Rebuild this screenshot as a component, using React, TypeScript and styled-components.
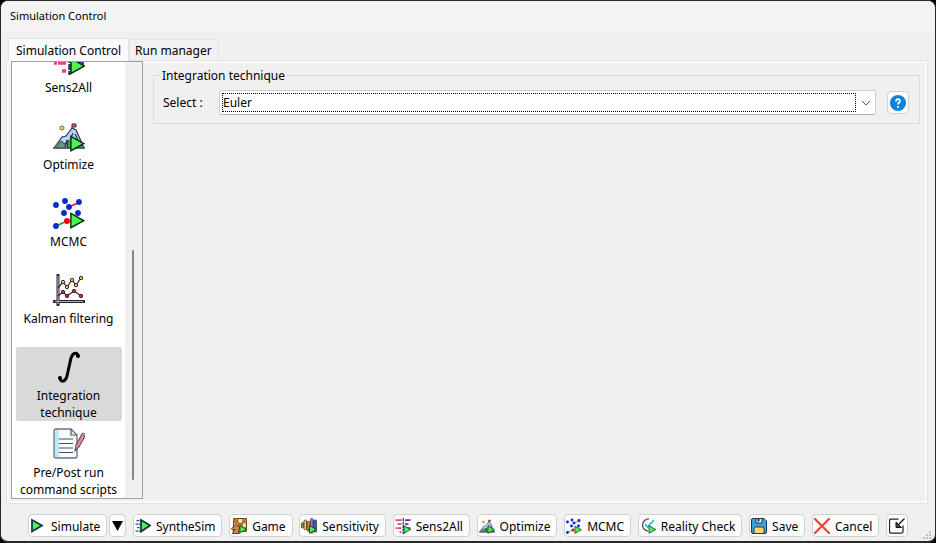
import React from 'react';
import styled, { createGlobalStyle } from 'styled-components';

const GlobalStyle = createGlobalStyle`
  * { box-sizing: border-box; }
  body { margin: 0; background: #000; }
  button, select { font: inherit; color: inherit; }
`;

const Window = styled.main`
  display: flex;
  flex-direction: column;
  height: 100vh;
  border: 1px solid #2b282c;
  border-bottom-width: 2px;
  border-radius: 8px;
  overflow: hidden;
  background: #f0f0f0;
  color: #000;
  font: 12px/17px 'Noto Sans', 'Open Sans', sans-serif;
`;

const TitleBar = styled.header`
  flex: none;
  height: 30px;
  padding: 0 9px;
  background: #f3f3f3;
  font: 11px/30px 'Noto Sans', 'Open Sans', sans-serif;
`;

const TabList = styled.div`
  display: flex;
  align-items: flex-end;
  flex: none;
  height: 29px;
  padding-left: 7px;
`;

const Tab = styled.button<{ $active?: boolean }>`
  height: ${p => (p.$active ? 23 : 21)}px;
  padding: 0 ${p => (p.$active ? 7 : 5)}px;
  margin-bottom: ${p => (p.$active ? -1 : 0)}px;
  position: relative;
  border: 1px solid #e3e3e3;
  border-bottom: 0;
  background: ${p => (p.$active ? '#fafafa' : '#f1f1f1')};
  white-space: nowrap;
`;

const Panel = styled.section`
  display: flex;
  flex: 1;
  min-height: 0;
  gap: 10px;
  margin: 0 7px 0 5px;
  padding: 0 7px 4px 4px;
  border: 1px solid #e3e3e3;
  box-shadow: inset 0 0 0 2px #f9f9f9;
`;

const ListBox = styled.nav`
  display: flex;
  flex: none;
  width: 132px;
  border: 1px solid #a0a0a5;
  background: #fff;
`;

const Items = styled.div`
  display: flex;
  flex: 1;
  flex-direction: column;
  justify-content: flex-end;
  align-items: center;
  gap: 3px;
  overflow: hidden;
`;

const Item = styled.button<{ $selected?: boolean }>`
  display: flex;
  flex: none;
  flex-direction: column;
  align-items: center;
  gap: 4px;
  width: 106px;
  height: 74px;
  padding: 4px 0 0;
  border: 0;
  border-radius: 2px;
  background: ${p => (p.$selected ? '#d9d9d9' : 'transparent')};
  white-space: pre-line;
`;

const ScrollTrack = styled.div`
  display: flex;
  flex-direction: column;
  justify-content: flex-end;
  align-items: center;
  width: 17px;
  padding: 0 2px 18px 0;
  background: #f0f0f0;
`;

const ScrollThumb = styled.div`
  width: 2px;
  height: 55%;
  border-radius: 1px;
  background: #868686;
`;

const Settings = styled.div`
  flex: 1;
  padding-top: 6px;
`;

const Group = styled.fieldset`
  min-width: 0;
  margin: 0;
  padding: 6px 10px 8px 9px;
  border: 1px solid #dcdcdc;
`;

const Legend = styled.legend`
  margin-left: -3px;
  padding: 0 2px;
`;

const Field = styled.div`
  display: flex;
  align-items: center;
`;

const FieldLabel = styled.label`
  flex: none;
  width: 56px;
`;

const Combo = styled.div`
  display: grid;
  flex: 1;
  align-items: center;
  height: 25px;
  padding: 2px;
  margin-right: 11px;
  border: 1px solid #d0d0d0;
  border-bottom-color: #b5b5b5;
  border-radius: 2px;
  background: #fff;
  > * { grid-area: 1 / 1; }
  > svg { justify-self: end; pointer-events: none; }
`;

const Select = styled.select`
  appearance: none;
  width: calc(100% - 17px);
  height: 19px;
  padding: 0;
  border: 1px dotted #000;
  border-radius: 0;
  outline: 0;
  background: #fff;
`;

const ToolButton = styled.button<{ $iconOnly?: boolean }>`
  display: flex;
  flex: none;
  align-items: center;
  justify-content: center;
  gap: 5px;
  height: 23px;
  padding: ${p => (p.$iconOnly ? '0 2px' : '0 6px 0 1px')};
  border: 1px solid #d0d0d0;
  border-radius: 4px;
  background: #fdfdfd;
  white-space: nowrap;
  svg { flex: none; }
`;

const SplitButton = styled.div`
  display: flex;
  gap: 2px;
`;

const ArrowButton = styled(ToolButton)`
  width: 17px;
  padding: 0;
`;

const Caption = styled.span`
  padding-top: 2px;
`;

const Footer = styled.footer`
  display: flex;
  flex: none;
  justify-content: space-between;
  padding: 10px 27px 4px;
`;

const Grip = styled.svg`
  position: absolute;
  right: 4px;
  bottom: 3px;
`;

const Play = ({ x = 15, y = 14, s = 1 }: { x?: number; y?: number; s?: number }) => (
  <path transform={`translate(${x} ${y}) scale(${s})`} d="M2 1.5 15.5 9 2 16.5Z" fill="#4df552" stroke="#082b22" strokeWidth="1.5" />
);

type IconProps = { size?: number };
const Svg = ({ size = 16, children }: IconProps & { children: React.ReactNode }) => (
  <svg width={size} height={size} viewBox="0 0 32 32" fill="none" aria-hidden="true">{children}</svg>
);

const SimulateIcon = () => (
  <Svg><path d="M4 4 24 15 4 27Z" fill="#4df552" stroke="#123348" strokeWidth="3.5" /></Svg>
);
const SyntheSimIcon = () => (
  <Svg>
    <path d="M3 5h7M1 12h9M4 19h6M1 26h9" stroke="#31536a" strokeWidth="2.5" strokeDasharray="5 1" />
    <path d="M12 4 30 15 12 27Z" fill="#4df552" stroke="#123348" strokeWidth="3.5" />
  </Svg>
);
const GameIcon = () => (
  <Svg>
    <path d="M5 1h26v26H5z" fill="#f4dfb5" stroke="#5b3f22" strokeWidth="2" />
    <path d="M5 1h9v9H5zM23 1h8v9h-8zM14 10h9v9h-9zM23 19h8v8h-8z" fill="#b97924" />
    <path d="M14 1v26M23 1v26M5 10h26M5 19h26" stroke="#77511f" />
    <path d="M3 31h14l-2-5c4-6 1-12-6-14l-1 3-7 6 2 3 5-1-4 5Z" fill="#c08a48" stroke="#60401e" strokeWidth="2" />
    <Play x={16} y={14} s={0.95} />
  </Svg>
);
const SensitivityIcon = () => (
  <Svg>
    <g stroke="#26372c" strokeWidth="1.5">
      <rect x="1" y="9" width="4" height="11" rx="2" fill="#74ba4c" />
      <rect x="6" y="4" width="5" height="19" rx="2" fill="#ffd13e" />
      <rect x="12" y="7" width="6" height="19" rx="2" fill="#f27a34" />
      <rect x="19" y="1" width="5" height="25" rx="2" fill="#ad73d3" />
      <rect x="25" y="4" width="6" height="24" rx="2" fill="#4058b5" />
      <path d="m14 22 5 8h6" fill="#e84f42" />
    </g>
    <Play x={15} y={14} />
  </Svg>
);
const Sens2AllIcon = ({ size }: IconProps) => (
  <Svg size={size}>
    <path d="M1 4h12M5 12h8M1 20h3M5 20h8M9 28h4" stroke="#ed3c91" strokeWidth="3.5" />
    <path d="M20 4h11M20 12h7M20 20h11" stroke="#7027b5" strokeWidth="3.5" />
    <path d="M16.5 0v32" stroke="#243747" strokeWidth="2.5" strokeDasharray="6 1" />
    <Play x={16} y={14} />
  </Svg>
);
const OptimizeIcon = ({ size }: IconProps) => (
  <Svg size={size}>
    <g transform="translate(0 3)">
      <path d="M1 25 9 14l4-1 6-8 4 2 8 18Z" fill="#b7d3fb" stroke="#29384a" strokeWidth="1.2" />
      <path d="m3 25 5-7 4 3 3-4 4 4 5-3 6 7Z" fill="#659a72" stroke="#294c36" strokeWidth="1" />
      <path d="m12 24 2-7 1 7M20 10l-3 7m5-6 3 6" stroke="#1e3e31" strokeWidth="1.2" />
      <circle cx="9" cy="5" r="2" fill="#ffdc64" stroke="#715726" />
      <path d="M19 6V1M19 1h4v3h-4" fill="#ef5964" stroke="#352d3a" />
      <path d="M0 25h32" stroke="#53635a" strokeWidth="1.5" />
    </g>
    <Play x={16} y={15} s={0.95} />
  </Svg>
);
const McmcIcon = ({ size }: IconProps) => (
  <Svg size={size}>
    <path d="m16 10 11-5" stroke="#f21622" strokeWidth="1.5" />
    <path d="m3 29 11-5" stroke="#00b21c" strokeWidth="1.5" />
    {[[3, 8], [12, 4], [26, 5], [16, 10], [11, 16], [25, 16], [3, 29]].map(([x, y]) => (
      <circle key={`${x}-${y}`} cx={x} cy={y} r="2.9" fill="#052bd3" />
    ))}
    <circle cx="14" cy="24" r="3" fill="#f00" />
    <Play x={16} y={15} s={0.95} />
  </Svg>
);
const KalmanIcon = () => (
  <Svg size={32}>
    <path d="M5 1v30M1 27.5h30" stroke="#272330" strokeWidth="3" strokeLinecap="round" />
    <path d="M5 2v28M2 27.5h28" stroke="#b5a9b8" strokeWidth="1.2" />
    <path d="m5 14 5-6 4 5 5-7 4 5 5-7M5 22l5-4 4 4 7-5 7 5" stroke="#292530" strokeWidth="1.2" />
    {[[10, 8], [14, 13], [19, 6], [23, 11], [28, 4]].map(([x, y]) => <circle key={x} cx={x} cy={y} r="1.7" fill="#e9c645" stroke="#2c2623" />)}
    {[[10, 18], [14, 22], [21, 17], [28, 22]].map(([x, y]) => <circle key={x} cx={x} cy={y} r="1.7" fill="#e42634" stroke="#421c26" />)}
  </Svg>
);
const IntegralIcon = () => (
  <Svg size={32}>
    <path d="M7 27c0 4 5 5 7-2l4-18c2-6 7-6 7-2" stroke="#000" strokeWidth="3" strokeLinecap="round" />
    <circle cx="7" cy="27" r="2" fill="#000" /><circle cx="25" cy="5" r="2" fill="#000" />
  </Svg>
);
const ScriptIcon = () => (
  <Svg size={32}>
    <path d="M3 1h15l6 6v21q0 2-2 2H3q-2 0-2-2V3q0-2 2-2Z" fill="#f5fafc" />
    <path d="M2 2h4v27H2Z" fill="#bee6f6" />
    <path d="M3 1h15l6 6v21q0 2-2 2H3q-2 0-2-2V3q0-2 2-2Z" stroke="#68747b" strokeWidth="1.3" />
    <path d="M18 1v6h6M6 11h14M6 15.500h14M6 20h14M6 24.500h14" stroke="#47535a" strokeWidth="1.2" />
    <path d="m22 23 1-6 6-11 3 2-6 11-4 4Z" fill="#e48d8c" stroke="#634b52" strokeWidth="1.1" />
    <path d="m29 6 1-1 2 1v2" fill="#eee" stroke="#47535a" />
  </Svg>
);
const RealityIcon = () => (
  <Svg>
    <path d="M18 2a12 12 0 1 0-2 24" stroke="#4a4057" strokeWidth="2.5" />
    <path d="m10 12 5 6L28 4" stroke="#16bdd0" strokeWidth="3" />
    <Play x={16} y={14} />
  </Svg>
);
const SaveIcon = () => (
  <Svg>
    <path d="M3 1h23l5 5v22q0 3-3 3H4q-3 0-3-3V4q0-3 2-3Z" fill="#3ca0df" stroke="#203747" strokeWidth="2" />
    <path d="M10 1h12v9H10z" fill="#eef3f5" stroke="#203747" strokeWidth="2" />
    <path d="M13 2h4v5h-4z" fill="#203747" />
    <path d="M6 31V21q0-3 3-3h14q3 0 3 3v10z" fill="#ffd66e" stroke="#203747" strokeWidth="2" />
  </Svg>
);
const CancelIcon = () => (
  <Svg><path d="m2 2 28 28M30 2 2 30" stroke="#f44336" strokeWidth="4.5" strokeLinecap="round" /></Svg>
);
const DockIcon = () => (
  <Svg>
    <path d="M19 2H4Q1 2 1 5v22q0 3 3 3h21q3 0 3-3V15" stroke="#222" strokeWidth="2.5" />
    <path d="M31 1 17 15" stroke="#111" strokeWidth="2.5" />
    <path d="M14 8v11h11Z" fill="#285b32" stroke="#111" strokeWidth="2" />
  </Svg>
);
const HelpIcon = () => (
  <Svg>
    <circle cx="16" cy="16" r="16" fill="#0c83da" />
    <path d="M12 13c0-6 8-6 8-1 0 3-4 3-4 7" stroke="#fff" strokeWidth="3.5" />
    <circle cx="16" cy="24" r="2.2" fill="#fff" />
  </Svg>
);

const items = [
  { label: 'Sens2All', icon: <Sens2AllIcon size={32} /> },
  { label: 'Optimize', icon: <OptimizeIcon size={32} /> },
  { label: 'MCMC', icon: <McmcIcon size={32} /> },
  { label: 'Kalman filtering', icon: <KalmanIcon /> },
  { label: 'Integration\ntechnique', icon: <IntegralIcon />, selected: true },
  { label: 'Pre/Post run\ncommand scripts', icon: <ScriptIcon /> },
];

const actions = [
  { label: 'SyntheSim', icon: <SyntheSimIcon /> },
  { label: 'Game', icon: <GameIcon /> },
  { label: 'Sensitivity', icon: <SensitivityIcon /> },
  { label: 'Sens2All', icon: <Sens2AllIcon /> },
  { label: 'Optimize', icon: <OptimizeIcon /> },
  { label: 'MCMC', icon: <McmcIcon /> },
  { label: 'Reality Check', icon: <RealityIcon /> },
  { label: 'Save', icon: <SaveIcon /> },
  { label: 'Cancel', icon: <CancelIcon /> },
];

export default function App() {
  return (
    <>
      <GlobalStyle />
      <Window>
        <TitleBar>Simulation Control</TitleBar>
        <TabList role="tablist">
          <Tab role="tab" aria-selected="true" $active>Simulation Control</Tab>
          <Tab role="tab" aria-selected="false">Run manager</Tab>
        </TabList>
        <Panel role="tabpanel">
          <ListBox>
            <Items>
              {items.map(item => (
                <Item key={item.label} $selected={item.selected}>
                  {item.icon}
                  <span>{item.label}</span>
                </Item>
              ))}
            </Items>
            <ScrollTrack><ScrollThumb /></ScrollTrack>
          </ListBox>
          <Settings>
            <Group>
              <Legend>Integration technique</Legend>
              <Field>
                <FieldLabel htmlFor="technique">Select :</FieldLabel>
                <Combo>
                  <Select id="technique" defaultValue="Euler"><option>Euler</option></Select>
                  <svg width="14" height="14" viewBox="0 0 14 14" fill="none" aria-hidden="true">
                    <path d="m3 5 4 4 4-4" stroke="#555" />
                  </svg>
                </Combo>
                <ToolButton $iconOnly aria-label="Help"><HelpIcon /></ToolButton>
              </Field>
            </Group>
          </Settings>
        </Panel>
        <Footer>
          <SplitButton>
            <ToolButton><SimulateIcon /><Caption>Simulate</Caption></ToolButton>
            <ArrowButton aria-label="Simulate options">
              <svg width="11" height="10" viewBox="0 0 11 10" aria-hidden="true"><path d="M0 0h11L5.5 10Z" fill="#000" /></svg>
            </ArrowButton>
          </SplitButton>
          {actions.map(action => (
            <ToolButton key={action.label}>{action.icon}<Caption>{action.label}</Caption></ToolButton>
          ))}
          <ToolButton $iconOnly aria-label="Dock window"><DockIcon /></ToolButton>
        </Footer>
        <Grip width="9" height="9" viewBox="0 0 9 9" fill="#bdbdbd" aria-hidden="true">
          <path d="M6 0h2v2H6zM3 3h2v2H3zM6 3h2v2H6zM0 6h2v2H0zM3 6h2v2H3zM6 6h2v2H6z" />
        </Grip>
      </Window>
    </>
  );
}
